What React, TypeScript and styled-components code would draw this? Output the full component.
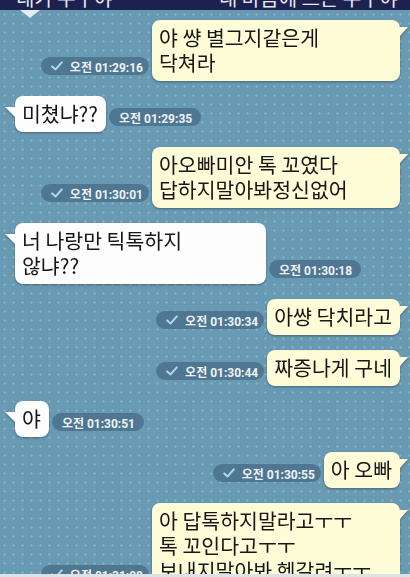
import React from "react";
import styled, { createGlobalStyle } from "styled-components";

const Global = createGlobalStyle`
  html, body { margin: 0; padding: 0; background: #689bb3; }
  body { font-family: "Noto Sans CJK KR", "Noto Sans", sans-serif; }
`;

const Screen = styled.div`
  width: 410px;
  height: 577px;
  display: flex;
  flex-direction: column;
  overflow: hidden;
  background: #689bb3;
`;

const TopBar = styled.div`
  position: relative;
  z-index: 2;
  flex: none;
  height: 10px;
  background: #1c2150;
  display: flex;
  justify-content: space-between;
  padding: 0 12px 0 16px;
`;

const TopTitle = styled.span`
  display: block;
  height: 20px;
  margin-top: -12px;
  font-size: 20px;
  line-height: 20px;
  color: #e6e9f3;
  white-space: nowrap;
`;

const DropArrow = styled.div`
  position: absolute;
  left: 20px;
  top: 10px;
  width: 0;
  height: 0;
  border-left: 10px solid transparent;
  border-right: 10px solid transparent;
  border-top: 8px solid #e4edf2;
`;

const Chat = styled.div`
  flex: 1;
  min-height: 0;
  overflow: hidden;
  display: flex;
  flex-direction: column;
  gap: 15px;
  padding: 10px 10px 0 15px;
  background-color: #689bb3;
  background-image: radial-gradient(
    circle,
    rgba(255, 255, 255, 0.22) 0.9px,
    transparent 1.3px
  );
  background-size: 9px 9px;
`;

const BottomBar = styled.div`
  flex: none;
  height: 3px;
  background: #dde2e5;
`;

const Row = styled.div<{ $mine: boolean }>`
  display: flex;
  align-items: flex-end;
  justify-content: ${(p) => (p.$mine ? "flex-end" : "flex-start")};
  gap: 3px;
  flex: none;
`;

const Bubble = styled.div<{ $mine: boolean; $w?: number }>`
  position: relative;
  box-sizing: border-box;
  flex: none;
  width: ${(p) => (p.$w ? `${p.$w}px` : "auto")};
  padding: 5px 8px 6px 7px;
  border-radius: 8px;
  background: ${(p) => (p.$mine ? "#fffcd8" : "#fdfdfd")};
  color: #161616;
  font-family: "Noto Sans CJK KR", "Noto Sans", sans-serif;
  font-size: 20.5px;
  line-height: 25px;
  white-space: nowrap;
  filter: drop-shadow(0 1px 0.8px rgba(0, 0, 0, 0.35));

  &::after {
    content: "";
    position: absolute;
    width: 0;
    height: 0;
    ${(p) =>
      p.$mine
        ? `top: 7px; right: -8px; border-left: 8px solid #fffcd8; border-bottom: 9px solid transparent;`
        : `top: 11px; left: -10px; border-right: 10px solid #fdfdfd; border-bottom: 10px solid transparent;`}
  }
`;

const Line = styled.div``;

const Pill = styled.div<{ $check: boolean }>`
  flex: none;
  display: inline-flex;
  align-items: center;
  gap: 7px;
  height: 18px;
  margin-bottom: 6px;
  padding: ${(p) => (p.$check ? "0 6px 0 10px" : "0 9px 0 10px")};
  border-radius: 9px;
  background: #4f7792;
  color: #eef3f6;
  font-family: Roboto, "Noto Sans CJK KR", sans-serif;
  font-size: 12px;
  font-weight: 700;
  white-space: nowrap;
`;

const Check = () => (
  <svg width="12" height="10" viewBox="0 0 12 10">
    <path
      d="M1.2 5.4 L4.6 8.4 L10.8 1.4"
      stroke="#a8dcf5"
      strokeWidth="2"
      fill="none"
      strokeLinecap="round"
      strokeLinejoin="round"
    />
  </svg>
);

type Msg = { mine: boolean; lines: string[]; time: string; w?: number };

const messages: Msg[] = [
  { mine: true, lines: ["야 썅 별그지같은게", "닥쳐라"], time: "오전 01:29:16", w: 248 },
  { mine: false, lines: ["미쳤냐??"], time: "오전 01:29:35" },
  { mine: true, lines: ["아오빠미안 톡 꼬였다", "답하지말아봐정신없어"], time: "오전 01:30:01", w: 248 },
  { mine: false, lines: ["너 나랑만 틱톡하지", "않냐??"], time: "오전 01:30:18", w: 251 },
  { mine: true, lines: ["아썅 닥치라고"], time: "오전 01:30:34" },
  { mine: true, lines: ["짜증나게 구네"], time: "오전 01:30:44" },
  { mine: false, lines: ["야"], time: "오전 01:30:51" },
  { mine: true, lines: ["아 오빠"], time: "오전 01:30:55" },
  { mine: true, lines: ["아 답톡하지말라고ㅜㅜ", "톡 꼬인다고ㅜㅜ", "보내지말아봐 헷갈려ㅜㅜ"], time: "오전 01:31:08", w: 248 },
];

export default function App() {
  return (
    <Screen>
      <Global />
      <TopBar>
        <TopTitle>네가 누구야</TopTitle>
        <TopTitle>내 마음에 드는 누구야</TopTitle>
        <DropArrow />
      </TopBar>
      <Chat>
        {messages.map((m, i) => {
          const pill = (
            <Pill $check={m.mine}>
              {m.mine && <Check />}
              <span>{m.time}</span>
            </Pill>
          );
          const bubble = (
            <Bubble $mine={m.mine} $w={m.w}>
              {m.lines.map((l, j) => (
                <Line key={j}>{l}</Line>
              ))}
            </Bubble>
          );
          return (
            <Row key={i} $mine={m.mine}>
              {m.mine ? (
                <>
                  {pill}
                  {bubble}
                </>
              ) : (
                <>
                  {bubble}
                  {pill}
                </>
              )}
            </Row>
          );
        })}
      </Chat>
      <BottomBar />
    </Screen>
  );
}
